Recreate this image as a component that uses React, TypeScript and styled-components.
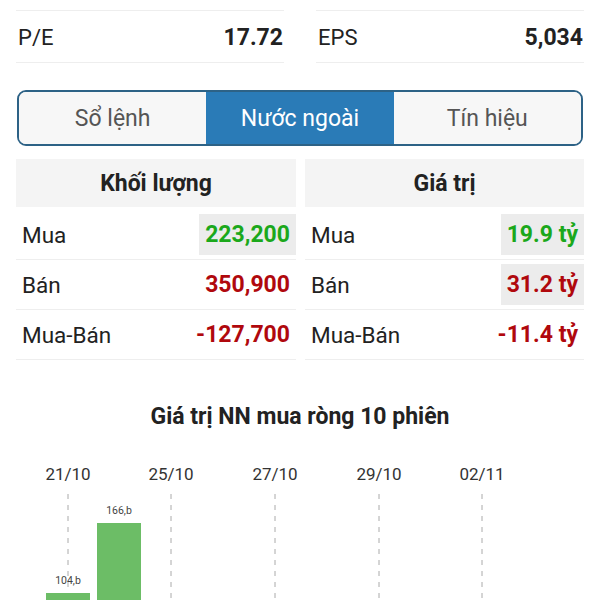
import styled, { createGlobalStyle } from 'styled-components';

const GlobalStyle = createGlobalStyle`
  body {
    margin: 0;
    background: #fff;
    font-family: Roboto, "Noto Sans", "Liberation Sans", sans-serif;
    color: #222;
  }
`;

// 전체 레이아웃
const Page = styled.div`
  width: 600px;
  height: 600px;
  overflow: hidden;
  padding: 0 16px;
  box-sizing: border-box;
`;

// chỉ số P/E, EPS
const MetricsGrid = styled.div`
  display: grid;
  grid-template-columns: 268px 268px;
  column-gap: 32px;
  margin-top: 10px;
`;

const MetricCell = styled.div`
  display: flex;
  align-items: center;
  justify-content: space-between;
  height: 49px;
  border-top: 1px solid #eeeeee;
  border-bottom: 1px solid #eeeeee;
  padding: 2px 1px 0 2px;
  font-size: 22px;

  b {
    font-weight: 700;
    font-size: 23px;
  }
`;

// tab
const Tabs = styled.div`
  display: grid;
  grid-template-columns: 1fr 1fr 1fr;
  height: 56px;
  margin: 27px 1px 0 1px;
  border: 2px solid #2d6286;
  border-radius: 9px;
  overflow: hidden;
  box-sizing: border-box;
`;

const Tab = styled.div<{ $active?: boolean }>`
  display: flex;
  align-items: center;
  justify-content: center;
  font-size: 23px;
  background: ${(p) => (p.$active ? '#2a7bb7' : '#f7f7f7')};
  color: ${(p) => (p.$active ? '#fff' : '#555')};
`;

// bảng khối lượng / giá trị
const Tables = styled.div`
  display: grid;
  grid-template-columns: 280px 279px;
  column-gap: 9px;
  margin-top: 13px;
`;

const TableHeader = styled.div`
  height: 48px;
  background: #f4f4f4;
  display: flex;
  align-items: center;
  justify-content: center;
  font-size: 23px;
  font-weight: 700;
  color: #222;
  margin-bottom: 3px;
`;

const Row = styled.div`
  display: flex;
  align-items: center;
  justify-content: space-between;
  height: 49px;
  border-bottom: 1px solid #eeeeee;
  padding-left: 6px;
  font-size: 22.5px;
  color: #222;
`;

const Value = styled.span<{ $tone: 'up' | 'down'; $hl?: boolean }>`
  display: flex;
  align-items: center;
  height: 41px;
  padding: 0 6px;
  min-width: 70px;
  justify-content: flex-end;
  font-size: 23px;
  font-weight: 700;
  color: ${(p) => (p.$tone === 'up' ? '#1ba81b' : '#b0080d')};
  background: ${(p) => (p.$hl ? '#ececec' : 'transparent')};
`;

// biểu đồ
const ChartTitle = styled.h3`
  margin: 43px 0 0 0;
  text-align: center;
  font-size: 23px;
  line-height: 28px;
  font-weight: 700;
  color: #222;
`;

const ChartBox = styled.div`
  margin: 11px -16px 0 -16px;

  svg {
    display: block;
  }
`;

type TableRow = { label: string; value: string; tone: 'up' | 'down'; hl?: boolean };

const volumeRows: TableRow[] = [
  { label: 'Mua', value: '223,200', tone: 'up', hl: true },
  { label: 'Bán', value: '350,900', tone: 'down' },
  { label: 'Mua-Bán', value: '-127,700', tone: 'down' },
];

const valueRows: TableRow[] = [
  { label: 'Mua', value: '19.9 tỷ', tone: 'up', hl: true },
  { label: 'Bán', value: '31.2 tỷ', tone: 'down', hl: true },
  { label: 'Mua-Bán', value: '-11.4 tỷ', tone: 'down' },
];

const dates = [
  { x: 68, label: '21/10' },
  { x: 171, label: '25/10' },
  { x: 275, label: '27/10' },
  { x: 379, label: '29/10' },
  { x: 482, label: '02/11' },
];

const bars = [
  { x: 46, top: 151, label: '104,b' },
  { x: 97, top: 81, label: '166,b' },
];

function Table({ title, rows }: { title: string; rows: TableRow[] }) {
  return (
    <div>
      <TableHeader>{title}</TableHeader>
      {rows.map((r) => (
        <Row key={r.label}>
          <span>{r.label}</span>
          <Value $tone={r.tone} $hl={r.hl}>
            {r.value}
          </Value>
        </Row>
      ))}
    </div>
  );
}

export default function App() {
  return (
    <>
      <GlobalStyle />
      <Page>
        <MetricsGrid>
          <MetricCell>
            <span>P/E</span>
            <b>17.72</b>
          </MetricCell>
          <MetricCell>
            <span>EPS</span>
            <b>5,034</b>
          </MetricCell>
        </MetricsGrid>

        <Tabs>
          <Tab>Sổ lệnh</Tab>
          <Tab $active>Nước ngoài</Tab>
          <Tab>Tín hiệu</Tab>
        </Tabs>

        <Tables>
          <Table title="Khối lượng" rows={volumeRows} />
          <Table title="Giá trị" rows={valueRows} />
        </Tables>

        <ChartTitle>Giá trị NN mua ròng 10 phiên</ChartTitle>
        <ChartBox>
          <svg width="600" height="180" viewBox="0 0 600 180">
            {dates.map((d) => (
              <g key={d.label}>
                <text
                  x={d.x}
                  y={38}
                  textAnchor="middle"
                  fontSize="17"
                  fill="#333"
                  fontFamily="Roboto, sans-serif"
                >
                  {d.label}
                </text>
                <line
                  x1={d.x}
                  x2={d.x}
                  y1={52}
                  y2={180}
                  stroke="#aaa"
                  strokeWidth="1"
                  strokeDasharray="5 6"
                />
              </g>
            ))}
            {bars.map((b) => (
              <g key={b.label}>
                <rect x={b.x} y={b.top} width={44} height={180 - b.top} fill="#6cbd66" />
                <text
                  x={b.x + 22}
                  y={b.top - 9}
                  textAnchor="middle"
                  fontSize="10.5"
                  fill="#444"
                  fontFamily="Roboto, sans-serif"
                >
                  {b.label}
                </text>
              </g>
            ))}
          </svg>
        </ChartBox>
      </Page>
    </>
  );
}
